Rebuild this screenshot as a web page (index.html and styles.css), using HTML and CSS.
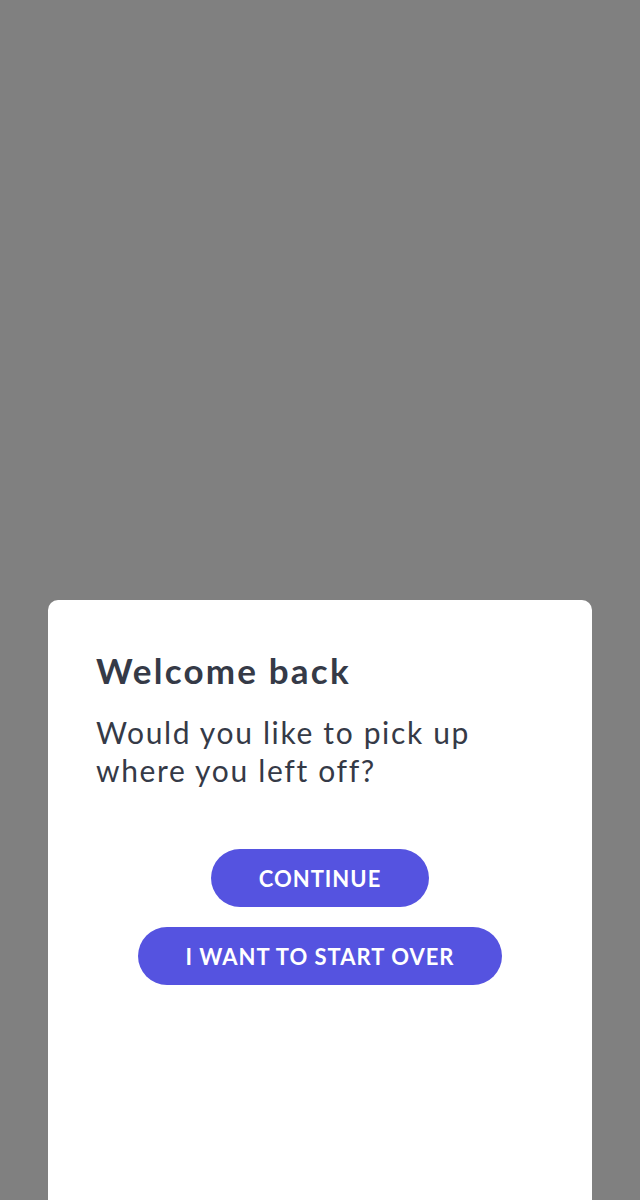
FILE: index.html
```html
<!DOCTYPE html>
<html>
<head>
<meta charset="utf-8">
<link rel="stylesheet" href="styles.css">
</head>
<body>
<div class="overlay">
  <div class="sheet">
    <h1 class="title">Welcome back</h1>
    <p class="message">Would you like to pick up where you left off?</p>
    <div class="actions">
      <button class="btn">CONTINUE</button>
      <button class="btn">I WANT TO START OVER</button>
    </div>
  </div>
</div>
</body>
</html>
```

FILE: styles.css
```css
html, body {
  margin: 0;
  padding: 0;
  height: 100%;
}
body {
  background: #808080;
  font-family: Lato, "Open Sans", sans-serif;
  overflow: hidden;
}
.overlay {
  height: 1200px;
  display: flex;
  flex-direction: column;
  justify-content: flex-end;
  padding: 0 48px;
  box-sizing: border-box;
}
.sheet {
  background: #fff;
  height: 600px;
  border-radius: 10px 10px 0 0;
  padding: 48px 48px 0;
  box-sizing: border-box;
  color: #353a47;
}
.title {
  margin: 0;
  font-size: 35px;
  font-weight: 700;
  line-height: 44px;
  letter-spacing: 2.2px;
}
.message {
  margin: 21px 0 0;
  font-size: 30px;
  line-height: 38px;
  font-weight: 400;
  letter-spacing: 1.65px;
}
.actions {
  margin-top: 60px;
  display: flex;
  flex-direction: column;
  align-items: center;
  gap: 20px;
}
.btn {
  border: none;
  background: #5553e0;
  color: #fff;
  font-family: Lato, sans-serif;
  font-weight: 700;
  font-size: 22px;
  letter-spacing: 1px;
  height: 58px;
  padding: 0 48px;
  border-radius: 29px;
}
```
